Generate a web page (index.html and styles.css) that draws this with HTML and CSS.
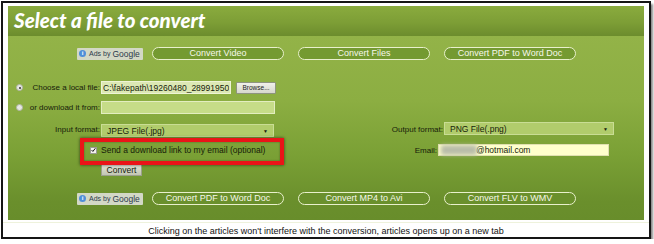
FILE: index.html
```html
<!DOCTYPE html>
<html lang="en">
<head>
    <meta charset="UTF-8">
    <meta name="viewport" content="width=device-width, initial-scale=1.0">
    <title>Select a file to convert</title>
    <link rel="stylesheet" href="styles.css">
</head>
<body>
    <div class="frame">
        <div class="panel">
            <div class="panel-header">
                <h1>Select a file to convert</h1>
            </div>
            <div class="panel-body">
                <div class="link-row">
                    <span class="ads"><span class="ads-icon">i</span><span class="ads-by">Ads by</span>Google</span>
                    <a class="pill" href="#">Convert Video</a>
                    <a class="pill" href="#">Convert Files</a>
                    <a class="pill" href="#">Convert PDF to Word Doc</a>
                </div>

                <form class="convert-form">
                    <div class="row row-file">
                        <label class="cell"><span class="radio checked"></span><span class="label-text">Choose a local file:</span></label>
                        <input class="file-path" type="text" value="C:\fakepath\19260480_28991950-1445.jpg" readonly>
                        <button type="button" class="browse">Browse...</button>
                    </div>
                    <div class="row row-url">
                        <label class="cell"><span class="radio"></span><span class="label-text">or download it from:</span></label>
                        <input class="url" type="text">
                    </div>
                    <div class="row row-format">
                        <label class="cell"><span class="label-text">Input format:</span></label>
                        <div class="select select-in"><span>JPEG File(.jpg)</span><span class="arrow">&#9660;</span></div>
                        <label class="cell cell-out"><span class="label-text">Output format:</span></label>
                        <div class="select select-out"><span>PNG File(.png)</span><span class="arrow">&#9660;</span></div>
                    </div>
                    <div class="row row-email">
                        <div class="cell cell-check"><span class="checkbox"><svg viewBox="0 0 8 8" width="6" height="6"><path d="M1 4.2 L3 6.3 L7 1.2" fill="none" stroke="#111" stroke-width="1.6"/></svg></span></div>
                        <span class="check-text">Send a download link to my email (optional)</span>
                        <label class="cell cell-email"><span class="label-text">Email:</span></label>
                        <div class="email"><span class="blur"></span><span>@hotmail.com</span></div>
                    </div>
                    <div class="row row-submit">
                        <div class="cell"></div>
                        <button type="button" class="convert">Convert</button>
                    </div>
                </form>

                <div class="link-row link-row-bottom">
                    <span class="ads"><span class="ads-icon">i</span><span class="ads-by">Ads by</span>Google</span>
                    <a class="pill" href="#">Convert PDF to Word Doc</a>
                    <a class="pill" href="#">Convert MP4 to Avi</a>
                    <a class="pill" href="#">Convert FLV to WMV</a>
                </div>

                <!-- annotation box around the email option -->
                <div class="highlight"></div>
            </div>
        </div>
        <p class="note">Clicking on the articles won't interfere with the conversion, articles opens up on a new tab</p>
    </div>
</body>
</html>
```

FILE: styles.css
```css
body {
    margin: 0;
    padding: 0;
    background-color: #fff;
    font-family: "Liberation Sans", Arial, sans-serif;
}

.frame {
    width: 646px;
    height: 234px;
    margin: 1px 0 0 1px;
    border: 2px solid #151515;
    box-shadow: 2px 3px 2px #8a8a8a;
    background-color: #fff;
}

.panel {
    margin: 3px 5px 0 5px;
    width: 636px;
}

.panel-header {
    height: 30px;
    background: linear-gradient(#8aab3e, #7d9e36 55%, #6c8c2d);
}

.panel-header h1 {
    margin: 0;
    padding-left: 6px;
    font-family: Lato, "Open Sans", sans-serif;
    font-weight: 900;
    font-style: italic;
    font-size: 20.5px;
    line-height: 29px;
    color: #fff;
}

.panel-body {
    position: relative;
    height: 184px;
    padding-top: 11px;
    box-sizing: border-box;
    background: linear-gradient(#93b348, #8cae42 35%, #7aa035 65%, #6a8f2c 90%, #688d2b);
}

.link-row {
    display: flex;
    align-items: center;
    gap: 9px;
    height: 13px;
    padding-left: 69px;
}

.link-row-bottom {
    margin-top: 16px;
}

.ads {
    display: flex;
    align-items: center;
    width: 66px;
    height: 12px;
    box-sizing: border-box;
    padding-left: 2px;
    background-color: #d3d8c6;
    border-radius: 1px;
    color: #2c3a4a;
    font-size: 8.5px;
}

.ads-icon {
    width: 7px;
    height: 7px;
    margin-right: 3px;
    border-radius: 50%;
    background-color: #4f8fd8;
    color: #fff;
    font-size: 6px;
    font-weight: bold;
    line-height: 7px;
    text-align: center;
}

.ads-by {
    font-size: 7px;
    margin-right: 2px;
}

.pill {
    width: 132px;
    height: 13px;
    box-sizing: border-box;
    margin-right: 5px;
    border: 1px solid #e9f0cc;
    border-radius: 7px;
    background-color: #749a31;
    color: #f6f8ea;
    font-size: 9px;
    line-height: 11px;
    text-align: center;
    text-decoration: none;
}

.link-row-bottom .pill {
    background-color: #6a902c;
}

.convert-form {
    margin: 21px 0 0;
}

.row {
    display: flex;
    align-items: center;
    font-size: 8px;
    color: #161c0a;
}

.row-url {
    margin-top: 7px;
}

.row-format {
    margin-top: 8px;
    align-items: flex-start;
    height: 15px;
}

.row-email {
    margin-top: 7px;
    height: 12px;
}

.row-submit {
    margin-top: 7px;
}

.cell {
    display: flex;
    align-items: center;
    width: 93px;
    flex-shrink: 0;
    box-sizing: border-box;
    padding-left: 8px;
    padding-right: 1px;
}

.label-text {
    margin-left: auto;
    white-space: nowrap;
}

.row-format .cell {
    height: 15px;
}

.cell-out {
    width: 170px;
}

.cell-email {
    width: 164px;
}

.radio {
    position: relative;
    width: 7px;
    height: 7px;
    box-sizing: border-box;
    border: 1px solid #b0b4a8;
    border-radius: 50%;
    background-color: #e6e8e2;
}

.radio.checked::after {
    content: "";
    position: absolute;
    left: 1.5px;
    top: 1.5px;
    width: 2px;
    height: 2px;
    border-radius: 50%;
    background-color: #333;
}

.file-path {
    width: 130px;
    height: 13px;
    box-sizing: border-box;
    padding: 0 1px;
    border: 1px solid #eef4d6;
    background-color: #dce8b4;
    font-family: inherit;
    font-size: 8.5px;
    color: #161c0a;
}

.browse {
    width: 40px;
    height: 12px;
    margin-left: 5px;
    padding: 0;
    border: 1px solid #8e9480;
    border-radius: 1px;
    background: linear-gradient(#f0f0ea, #d6d8cc);
    font-family: inherit;
    font-size: 6.5px;
    color: #222;
}

.url {
    width: 174px;
    height: 13px;
    box-sizing: border-box;
    border: 1px solid #e3edc0;
    background-color: #c6dc88;
}

.select {
    display: flex;
    justify-content: space-between;
    align-items: center;
    height: 13px;
    box-sizing: border-box;
    padding: 0 5px;
    border: 1px solid #c9dd94;
    background-color: #b1cc6c;
    font-size: 8.5px;
}

.select-in {
    width: 173px;
    margin-top: 2px;
}

.select-out {
    width: 170px;
}

.arrow {
    font-size: 5px;
}

.cell-check {
    justify-content: flex-end;
    padding-right: 4px;
}

.checkbox {
    display: flex;
    align-items: center;
    justify-content: center;
    width: 7px;
    height: 7px;
    box-sizing: border-box;
    border: 1px solid #9a9a90;
    background-color: #f2f2ee;
}

.check-text {
    width: 173px;
    flex-shrink: 0;
    font-size: 8.5px;
    color: #161c0a;
}

.email {
    display: flex;
    align-items: center;
    width: 171px;
    height: 12px;
    box-sizing: border-box;
    padding-left: 2px;
    border: 1px solid #e0e0b0;
    background-color: #ffffcc;
    font-size: 8.5px;
}

.blur {
    width: 36px;
    height: 10px;
    margin-right: -1px;
    background-color: #b8bca8;
    filter: blur(2px);
}

.convert {
    width: 41px;
    height: 13px;
    padding: 0;
    border: 1px solid #9ca08c;
    background: linear-gradient(#e6e8dc, #c2c6b2);
    font-family: inherit;
    font-size: 8.5px;
    color: #161c0a;
}

.highlight {
    position: absolute;
    left: 72px;
    top: 102px;
    width: 204px;
    height: 27px;
    box-sizing: border-box;
    border: 4px solid #ea1418;
    box-shadow: 0 0 3px rgba(0, 0, 0, 0.6), inset 0 0 2px rgba(0, 0, 0, 0.4);
}

.note {
    margin: 2px 0 0;
    padding-top: 2px;
    border-top: 1px solid #eef2dc;
    font-size: 9px;
    line-height: 12px;
    text-align: center;
    color: #111;
}
```
